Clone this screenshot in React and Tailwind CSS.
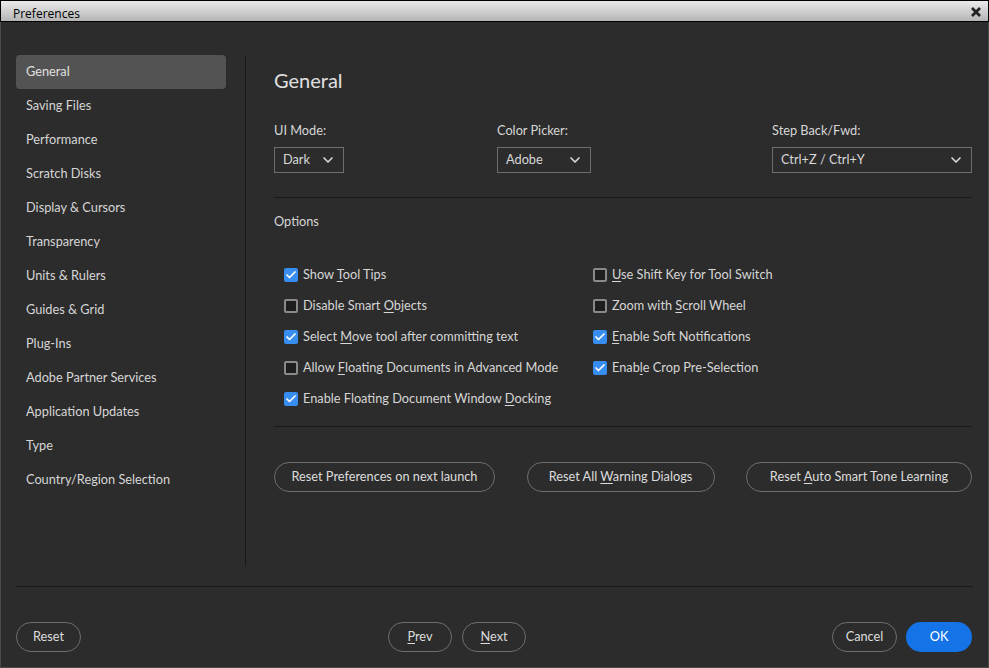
import { ChevronDown, Check } from 'lucide-react'

const navItems = [
  'General',
  'Saving Files',
  'Performance',
  'Scratch Disks',
  'Display & Cursors',
  'Transparency',
  'Units & Rulers',
  'Guides & Grid',
  'Plug-Ins',
  'Adobe Partner Services',
  'Application Updates',
  'Type',
  'Country/Region Selection',
]

// label split as [before, key letter, after]
const leftOptions = [
  { label: ['Show ', 'T', 'ool Tips'], checked: true },
  { label: ['Disable Smart ', 'O', 'bjects'], checked: false },
  { label: ['Select ', 'M', 'ove tool after committing text'], checked: true },
  { label: ['Allow ', 'F', 'loating Documents in Advanced Mode'], checked: false },
  { label: ['Enable Floating Document Window ', 'D', 'ocking'], checked: true },
]

const rightOptions = [
  { label: ['', 'U', 'se Shift Key for Tool Switch'], checked: false },
  { label: ['Zoom with ', 'S', 'croll Wheel'], checked: false },
  { label: ['', 'E', 'nable Soft Notifications'], checked: true },
  { label: ['Enab', 'l', 'e Crop Pre-Selection'], checked: true },
]

function KeyLabel({ parts }) {
  return (
    <span>
      {parts[0]}
      <span className="underline underline-offset-2">{parts[1]}</span>
      {parts[2]}
    </span>
  )
}

function Checkbox({ checked, label }) {
  return (
    <div className="flex h-5 items-center gap-[5px]">
      {checked ? (
        <span className="flex h-[14px] w-[14px] items-center justify-center rounded-[2px] bg-[#378ef0]">
          <Check className="h-3 w-3 text-white" strokeWidth={3.5} />
        </span>
      ) : (
        <span className="h-[14px] w-[14px] rounded-[2px] border-2 border-[#8a8a8a] bg-[#1e1e1e]" />
      )}
      <KeyLabel parts={label} />
    </div>
  )
}

function Select({ value, className }) {
  return (
    <div
      className={`flex h-[26px] items-center justify-between border border-[#6e6e6e] pl-2 pr-[7px] text-[#d8d8d8] ${className}`}
    >
      <span>{value}</span>
      <ChevronDown className="h-4 w-4 text-[#d8d8d8]" strokeWidth={2.5} />
    </div>
  )
}

function PillButton({ children, className = '' }) {
  return (
    <button
      className={`flex h-[30px] items-center justify-center rounded-full border border-[#6e6e6e] text-[#dcdcdc] ${className}`}
    >
      {children}
    </button>
  )
}

export default function App() {
  return (
    <div
      className="flex h-[668px] w-[989px] flex-col overflow-hidden bg-[#2c2c2c] text-[12.75px] text-[#d6d6d6]"
      style={{ fontFamily: 'Lato, "Noto Sans", sans-serif' }}
    >
      <div className="flex h-[22px] shrink-0 items-center justify-between border border-black bg-gradient-to-b from-[#ebebeb] to-[#b5b5b5] pl-3 pr-[5px]">
        <span
          className="pt-[5px] text-[12px] text-black"
          style={{ fontFamily: '"Open Sans", sans-serif' }}
        >
          Preferences
        </span>
        <svg width="12" height="12" viewBox="0 0 12 12" className="mr-[1px] mt-[1px]">
          <path d="M2 2 L10 10 M10 2 L2 10" stroke="#222" strokeWidth="2.8" />
        </svg>
      </div>

      <div className="flex flex-1 flex-col border-x border-b border-[#4a4a4a] px-[15px]">
        <div className="mt-[33px] flex h-[511px]">
          <nav className="flex w-[210px] flex-col">
            {navItems.map((item, i) => (
              <div
                key={item}
                className={`flex h-[34px] items-center rounded px-[10px] ${i === 0 ? 'bg-[#535353] text-[#e0e0e0]' : ''}`}
              >
                {item}
              </div>
            ))}
          </nav>
          <div className="ml-[19px] w-px bg-[#1a1a1a]" />
          <main className="ml-[28px] flex flex-1 flex-col pr-px">
            <h1 className="mt-[12px] text-[20px] leading-[26px] text-[#e0e0e0]">General</h1>

            <div className="mt-[28px] flex">
              <div className="w-[223px]">
                <div className="leading-[18px]">UI Mode:</div>
                <Select value="Dark" className="mt-[8px] w-[70px]" />
              </div>
              <div className="w-[275px]">
                <div className="leading-[18px]">Color Picker:</div>
                <Select value="Adobe" className="mt-[8px] w-[94px]" />
              </div>
              <div className="flex-1">
                <div className="leading-[18px]">Step Back/Fwd:</div>
                <Select value="Ctrl+Z / Ctrl+Y" className="mt-[8px] w-[200px]" />
              </div>
            </div>

            <div className="mt-[24px] h-px bg-[#1a1a1a]" />
            <div className="mt-[14px] leading-[18px]">Options</div>

            <div className="mt-[35px] flex pl-[10px]">
              <div className="flex w-[309px] flex-col gap-[11px]">
                {leftOptions.map((o) => (
                  <Checkbox key={o.label.join('')} {...o} />
                ))}
              </div>
              <div className="flex flex-col gap-[11px]">
                {rightOptions.map((o) => (
                  <Checkbox key={o.label.join('')} {...o} />
                ))}
              </div>
            </div>

            <div className="mt-[17px] h-px bg-[#1a1a1a]" />

            <div className="mt-[35px] flex justify-between">
              <PillButton className="w-[221px]">Reset Preferences on next launch</PillButton>
              <PillButton className="w-[188px]">
                <KeyLabel parts={['Reset All ', 'W', 'arning Dialogs']} />
              </PillButton>
              <PillButton className="w-[226px]">
                <KeyLabel parts={['Reset ', 'A', 'uto Smart Tone Learning']} />
              </PillButton>
            </div>
          </main>
        </div>

        <div className="mt-[20px] h-px bg-[#1a1a1a]" />

        <div className="mt-[35px] flex items-center">
          <PillButton className="w-[65px]">Reset</PillButton>
          <div className="ml-[307px] flex gap-[10px]">
            <PillButton className="w-[64px]">
              <KeyLabel parts={['', 'P', 'rev']} />
            </PillButton>
            <PillButton className="w-[64px]">
              <KeyLabel parts={['', 'N', 'ext']} />
            </PillButton>
          </div>
          <div className="ml-auto flex gap-[9px] pr-[1px]">
            <PillButton className="w-[65px]">Cancel</PillButton>
            <button className="flex h-[30px] w-[66px] items-center justify-center rounded-full bg-[#1473e6] text-white">
              OK
            </button>
          </div>
        </div>
      </div>
    </div>
  )
}
